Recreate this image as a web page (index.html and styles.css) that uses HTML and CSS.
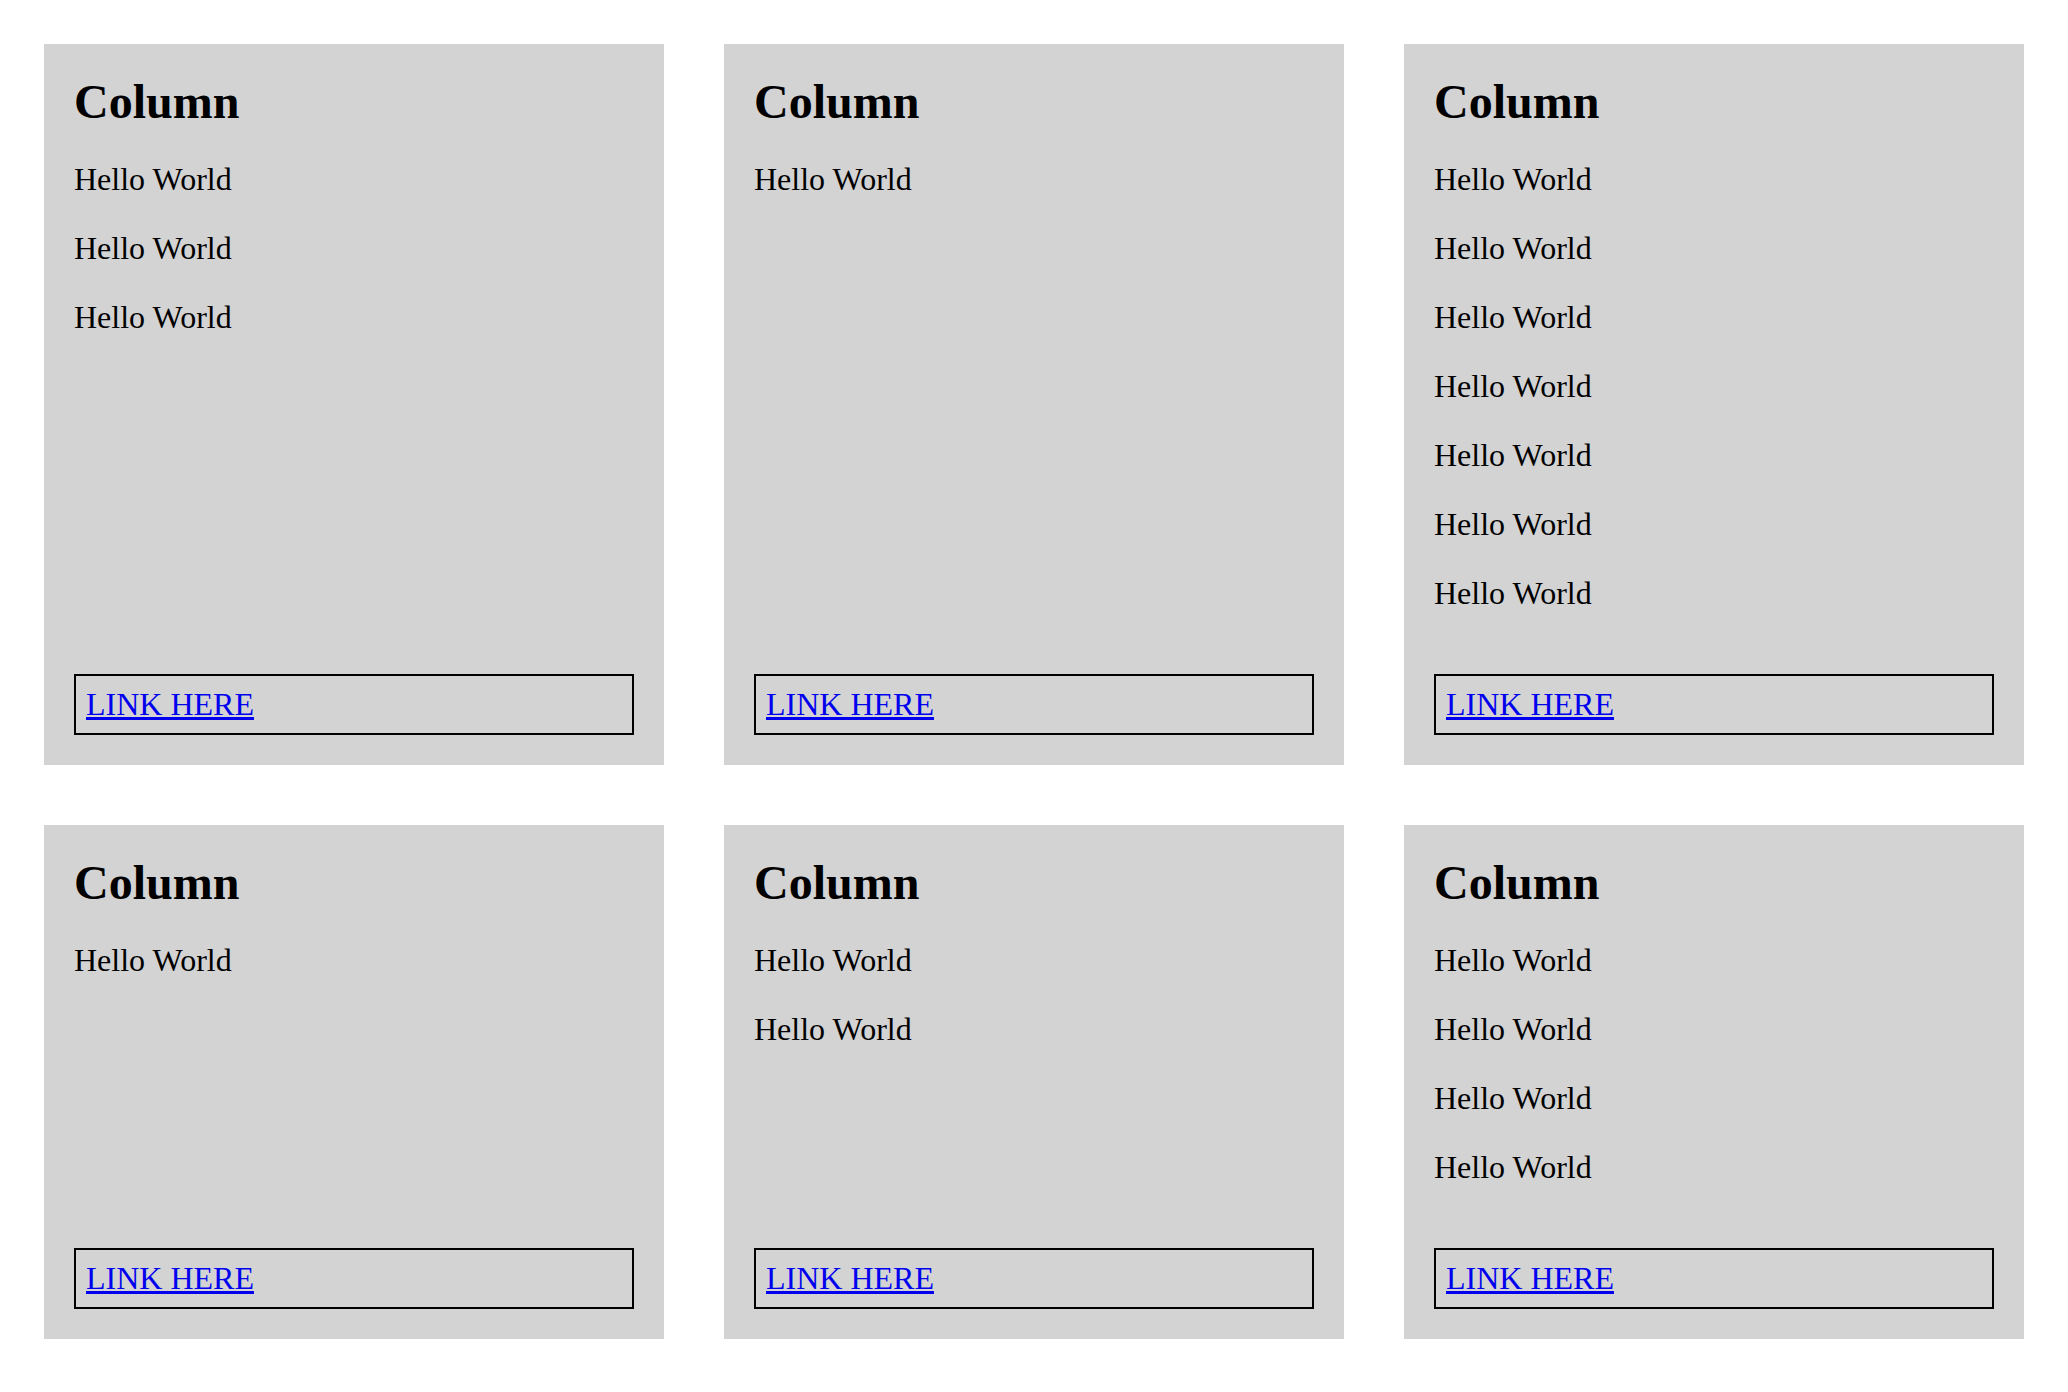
FILE: index.html
```html
<!DOCTYPE html>
<html lang="en">

<head>
    <meta charset="UTF-8">
    <meta name="viewport" content="width=device-width, initial-scale=1.0">
    <title>Columns</title>
    <link rel="stylesheet" href="styles.css">
</head>

<body>
    <div class="grid">
        <div class="column">
            <div class="column-body">
                <h2>Column</h2>
                <p>Hello World</p>
                <p>Hello World</p>
                <p>Hello World</p>
            </div>
            <div class="column-footer"><a href="#">LINK HERE</a></div>
        </div>
        <div class="column">
            <div class="column-body">
                <h2>Column</h2>
                <p>Hello World</p>
            </div>
            <div class="column-footer"><a href="#">LINK HERE</a></div>
        </div>
        <div class="column">
            <div class="column-body">
                <h2>Column</h2>
                <p>Hello World</p>
                <p>Hello World</p>
                <p>Hello World</p>
                <p>Hello World</p>
                <p>Hello World</p>
                <p>Hello World</p>
                <p>Hello World</p>
            </div>
            <div class="column-footer"><a href="#">LINK HERE</a></div>
        </div>
        <div class="column">
            <div class="column-body">
                <h2>Column</h2>
                <p>Hello World</p>
            </div>
            <div class="column-footer"><a href="#">LINK HERE</a></div>
        </div>
        <div class="column">
            <div class="column-body">
                <h2>Column</h2>
                <p>Hello World</p>
                <p>Hello World</p>
            </div>
            <div class="column-footer"><a href="#">LINK HERE</a></div>
        </div>
        <div class="column">
            <div class="column-body">
                <h2>Column</h2>
                <p>Hello World</p>
                <p>Hello World</p>
                <p>Hello World</p>
                <p>Hello World</p>
            </div>
            <div class="column-footer"><a href="#">LINK HERE</a></div>
        </div>
    </div>
</body>

</html>
```

FILE: styles.css
```css
body {
    margin: 0;
    background-color: #fff;
    color: #000;
    font-family: 'Liberation Serif', 'Times New Roman', serif;
    font-size: 32px;
}

.grid {
    display: grid;
    grid-template-columns: repeat(3, 1fr);
    gap: 60px;
    padding: 44px;
}

.column {
    display: flex;
    flex-direction: column;
    background-color: lightgray;
    padding: 30px;
}

/* pushes the link box to the bottom of each column */
.column-body {
    flex: 1;
}

.column-body h2 {
    margin: 0;
    font-size: 48px;
    font-weight: bold;
}

.column-body p {
    margin: 32px 0;
}

.column-footer {
    margin-top: 30px;
    padding: 10px;
    border: 2px solid #000;
}

.column-footer a {
    color: #0000ee;
}
```
